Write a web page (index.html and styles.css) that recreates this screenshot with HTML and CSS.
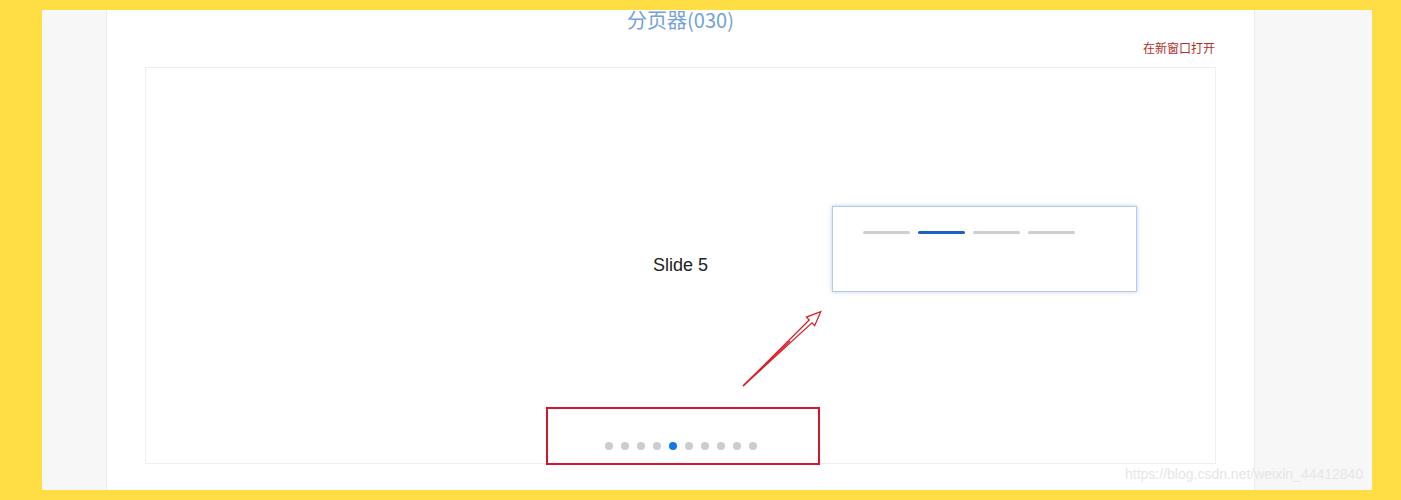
FILE: index.html
```html
<!DOCTYPE html>
<html lang="zh">
<head>
<meta charset="utf-8">
<title>分页器(030)</title>
<link rel="stylesheet" href="styles.css">
</head>
<body>
<div class="frame">
  <div class="inner">
    <aside class="side side-left"></aside>
    <main class="main">
      <h1 class="title">分页器(030)</h1>
      <div class="open-row"><a class="open-link" href="#">在新窗口打开</a></div>
      <div class="demo">
        <div class="slide">Slide 5</div>
        <div class="bullets">
          <span class="bullet"></span>
          <span class="bullet"></span>
          <span class="bullet"></span>
          <span class="bullet"></span>
          <span class="bullet active"></span>
          <span class="bullet"></span>
          <span class="bullet"></span>
          <span class="bullet"></span>
          <span class="bullet"></span>
          <span class="bullet"></span>
        </div>
      </div>
    </main>
    <aside class="side side-right"></aside>
  </div>

  <div class="annot-rect"></div>
  <svg class="annot-arrow" width="100" height="90" viewBox="735 305 100 90" xmlns="http://www.w3.org/2000/svg">
    <polygon points="743,386 812,322.8 814.7,325.7 820.7,311.7 806.5,317.1 809.2,320 743,386" fill="#fff" stroke="#d8202c" stroke-width="1.3" stroke-linejoin="miter"/>
    <line x1="743" y1="386" x2="790" y2="341" stroke="#d8202c" stroke-width="1.2"/>
  </svg>
  <div class="popup">
    <span class="bar"></span>
    <span class="bar active"></span>
    <span class="bar"></span>
    <span class="bar"></span>
  </div>
  <div class="watermark">https://blog.csdn.net/weixin_44412840</div>
</div>
</body>
</html>
```

FILE: styles.css
```css
* { box-sizing: border-box; }
html, body {
  margin: 0;
  padding: 0;
  background: #ffdd44;
  width: 1401px;
  height: 500px;
  overflow: hidden;
}
.frame {
  position: relative;
  width: 1401px;
  height: 500px;
  padding: 10px 29px 10px 42px;
  font-family: "Noto Sans CJK SC", "Liberation Sans", sans-serif;
}
.inner {
  display: flex;
  height: 480px;
}
.side {
  background: #f7f7f7;
}
.side-left { width: 64px; }
.side-right { width: 117px; }
.main {
  width: 1149px;
  background: #fff;
  border-left: 1px solid #ececec;
  border-right: 1px solid #ececec;
  padding: 0 38px 0 38px;
}
.title {
  margin: 0;
  height: 20px;
  line-height: 20px;
  font-size: 20px;
  font-weight: normal;
  color: #74a2d8;
  text-align: center;
}
.open-row {
  margin-top: 10px;
  height: 16px;
  display: flex;
  justify-content: flex-end;
  padding-right: 1px;
}
.open-link {
  font-size: 12px;
  line-height: 16px;
  color: #b0302a;
  text-decoration: none;
}
.demo {
  position: relative;
  margin-top: 11px;
  height: 397px;
  border: 1px solid #efefef;
  display: flex;
  align-items: center;
  justify-content: center;
}
.slide {
  font-family: "Liberation Sans", Arial, sans-serif;
  font-size: 18px;
  color: #222;
}
.bullets {
  position: absolute;
  left: 0;
  right: 0;
  bottom: 13px;
  display: flex;
  justify-content: center;
}
.bullet {
  width: 8px;
  height: 8px;
  margin: 0 4px;
  border-radius: 50%;
  background: #cccccc;
}
.bullet.active { background: #1177ee; }

.annot-rect {
  position: absolute;
  left: 546px;
  top: 407px;
  width: 274px;
  height: 58px;
  border: 2px solid #d4152e;
}
.annot-arrow {
  position: absolute;
  left: 735px;
  top: 305px;
}
.popup {
  position: absolute;
  left: 832px;
  top: 206px;
  width: 305px;
  height: 86px;
  background: #fff;
  border: 1px solid #b3cbea;
  box-shadow: 0 0 4px rgba(120, 160, 220, 0.5);
  display: flex;
  gap: 8px;
  padding: 24px 0 0 30px;
  align-items: flex-start;
}
.bar {
  width: 47px;
  height: 3px;
  border-radius: 2px;
  background: #cfcfcf;
}
.bar.active { background: #1a62c4; }
.watermark {
  position: absolute;
  left: 1125px;
  top: 465px;
  font-family: "Liberation Sans", Arial, sans-serif;
  font-size: 14px;
  line-height: 18px;
  color: #e6e6e6;
  white-space: nowrap;
}
```
